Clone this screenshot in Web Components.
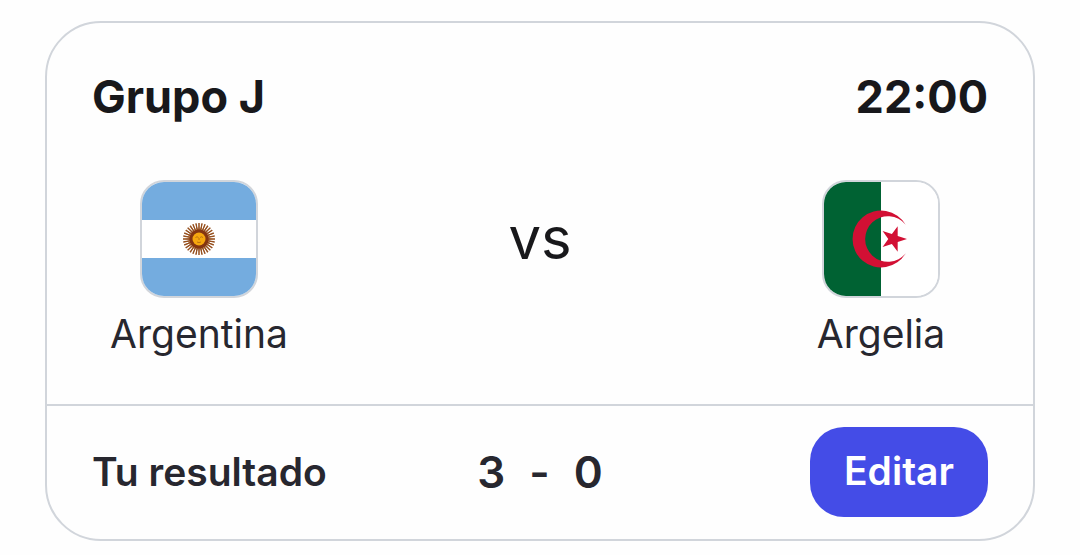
<!DOCTYPE html>
<html lang="es">
<head>
<meta charset="utf-8">
<meta name="viewport" content="width=device-width, initial-scale=1">
<title>Grupo J</title>
<style>
  body {
    margin: 0;
    padding: 21px 45px 14px;
    background: #fefefe;
    font-family: Inter, sans-serif;
  }
</style>
</head>
<body>
<match-card group="Grupo J" time="22:00">
  <match-team slot="home" name="Argentina">
    <flag-icon country="ar"></flag-icon>
  </match-team>
  <match-team slot="away" name="Argelia">
    <flag-icon country="dz"></flag-icon>
  </match-team>
  <match-result slot="result" home="3" away="0">Tu resultado</match-result>
</match-card>

<script>
/* Points of a star with n tips around (cx, cy), first tip at angle a */
function star(cx, cy, outer, inner, n, a) {
    const points = [];
    for (let i = 0; i < 2*n; i++) {
	const r = i % 2 ? inner : outer,
	      t = a + i*Math.PI/n;
	points.push(`${(cx + r*Math.cos(t)).toFixed(2)},${(cy + r*Math.sin(t)).toFixed(2)}`);
    }
    return points.join(' ');
}

const flags = {
    ar: `
<rect width="114" height="114" fill="#74acdf"/>
<rect y="38" width="114" height="38" fill="#fff"/>
<circle cx="57" cy="57" r="12.5" fill="none" stroke="#96501f" stroke-width="7" pathLength="64" stroke-dasharray="1 1" stroke-dashoffset=".5"/>
<polygon points="${star(57, 57, 16.5, 9, 32, 0)}" fill="#96501f"/>
<circle cx="57" cy="57" r="9.5" fill="#843511"/>
<circle cx="57" cy="57" r="6.5" fill="#f6a70f"/>
<path d="M53.5 55.5q1.5-1.5 3 0m1.5 0q1.5-1.5 3 0M57 56v2m-2 2q2 1.2 4 0" fill="none" stroke="#a35d10" stroke-width=".7"/>`,
    dz: `
<rect width="114" height="114" fill="#fff"/>
<rect width="57" height="114" fill="#006233"/>
<path d="M81.7 42.7A28.5 28.5 0 1 0 81.7 71.3A22.8 22.8 0 1 1 81.7 42.7z" fill="#d21034"/>
<polygon points="${star(69.5, 57, 13.5, 5.2, 5, 0)}" fill="#d21034"/>`
};

/**
 * A square flag with rounded corners
 */
customElements.define("flag-icon", class FlagIcon extends HTMLElement {
    constructor() {
	super();

	const shadow = this.attachShadow({ mode: "open" });
	shadow.innerHTML = `
<style>
  :host {
    display: block;
    box-sizing: border-box;
    width: 118px;
    height: 118px;
    border: 2px solid #d1d5db;
    border-radius: 24px;
    overflow: hidden;
  }
  svg {
    display: block;
    width: 100%;
    height: 100%;
  }
</style>
<svg viewBox="0 0 114 114" aria-hidden="true">${flags[this.getAttribute("country")]}</svg>
`
    }
});

/**
 * One side of a match: flag above, name below
 */
customElements.define("match-team", class MatchTeam extends HTMLElement {
    constructor() {
	super();

	const shadow = this.attachShadow({ mode: "open" });
	shadow.innerHTML = `
<style>
  :host {
    display: flex;
    flex-direction: column;
    align-items: center;
    gap: 12px;
    color: #27272f;
    font-size: 39px;
    line-height: 48px;
  }
</style>
<slot></slot>
<span>${this.getAttribute("name")}</span>
`
    }
});

/**
 * The user's own forecast, with a button to edit it
 */
customElements.define("match-result", class MatchResult extends HTMLElement {
    constructor() {
	super();

	const shadow = this.attachShadow({ mode: "open" });
	shadow.innerHTML = `
<style>
  :host {
    display: grid;
    grid-template-columns: 1fr auto 1fr;
    align-items: center;
    padding: 21px 45px 22px;
    color: #27272f;
    font-size: 39px;
    font-weight: 600;
    line-height: 48px;
  }
  .score {
    display: flex;
    gap: 24px;
    font-size: 44px;
  }
  button {
    justify-self: end;
    padding: 20px 34px 22px;
    border: 0;
    border-radius: 34px;
    background: #444ce7;
    color: #fff;
    font: inherit;
    cursor: pointer;
  }
</style>
<span><slot></slot></span>
<span class="score"><span>${this.getAttribute("home")}</span><span>-</span><span>${this.getAttribute("away")}</span></span>
<button type="button">Editar</button>
`
    }
});

/**
 * The card around a match: group and time, both teams, forecast
 */
customElements.define("match-card", class MatchCard extends HTMLElement {
    constructor() {
	super();

	const shadow = this.attachShadow({ mode: "open" });
	shadow.innerHTML = `
<style>
  :host {
    display: block;
    border: 2px solid #d1d5db;
    border-radius: 56px;
    background: #fefefe;
    color: #18181b;
    font-size: 45px;
    line-height: 52px;
  }
  header {
    display: flex;
    justify-content: space-between;
    padding: 48px 45px 0;
    font-weight: 700;
  }
  .teams {
    display: grid;
    grid-template-columns: 214px 1fr 214px;
    padding: 57px 45px 46px;
  }
  .versus {
    align-self: start;
    padding-top: 32px;
    text-align: center;
    font-size: 58px;
  }
  footer {
    border-top: 2px solid #d1d5db;
  }
</style>
<header>
  <span>${this.getAttribute("group")}</span>
  <time>${this.getAttribute("time")}</time>
</header>
<div class="teams">
  <slot name="home"></slot>
  <span class="versus">vs</span>
  <slot name="away"></slot>
</div>
<footer><slot name="result"></slot></footer>
`
    }
});
</script>
</body>
</html>
